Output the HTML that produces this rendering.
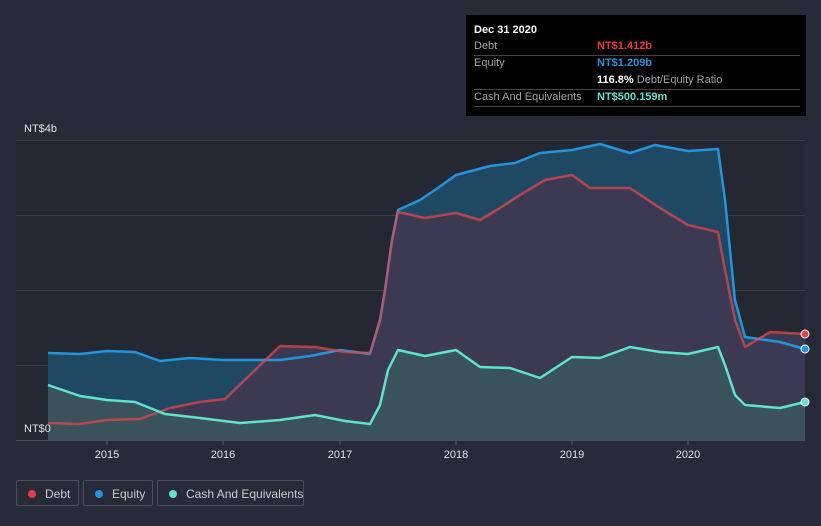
<!DOCTYPE html>
<html><head><style>
html,body{margin:0;background:#262b37;width:821px;height:526px;overflow:hidden;font-family:"Liberation Sans",sans-serif;position:relative}
.tt{position:absolute;left:466px;top:15px;width:340px;height:101px;background:#000}
.tt .r{position:absolute;left:8px;width:326px;font-size:11px;color:#a0a3a8;border-bottom:1px solid #444;height:17px;line-height:17px}
.lg{position:absolute;top:480px;height:26px;border:1px solid #4a4f5a;border-radius:2px;color:#c8cbd0;font-size:12px;line-height:26px;box-sizing:border-box;white-space:nowrap}
.lg i{position:absolute;left:11px;top:9px;width:8px;height:8px;border-radius:50%}
</style></head><body>
<svg width="821" height="526" style="position:absolute;left:0;top:0">
<rect x="16" y="140" width="789" height="300" fill="#232833"/>
<g stroke="#3a3f4a" stroke-width="1">
<line x1="16" y1="140.5" x2="805" y2="140.5"/><line x1="16" y1="215.5" x2="805" y2="215.5"/>
<line x1="16" y1="290.5" x2="805" y2="290.5"/><line x1="16" y1="365.5" x2="805" y2="365.5"/>
<line x1="16" y1="440.5" x2="805" y2="440.5" stroke="#4a4f5a"/>
</g>
<g stroke-linejoin="round">
<path d="M48,353 L80,354 107,351 135,352 160,361 190,358 223,360 280,360 310,356 340,350 370,354 380,320 385,290 392,240 398,210 420,200 435,190 456,175 490,166 515,163 540,153 572,150 600,144 630,153 655,145 688,151 718,149 725,200 735,300 745,337 780,342 805,349 L805,440 L48,440Z" fill="#1f4862"/>
<path d="M48,423 L80,424 107,420 140,419 170,408 200,402 225,399 250,375 280,346 315,347 345,352 370,353 380,320 385,290 392,240 398,212 425,218 456,213 480,220 500,208 520,195 545,180 572,175 590,188 630,188 660,208 688,225 718,232 725,270 735,320 745,347 770,332 805,334 L805,440 L48,440Z" fill="#3c3a52"/>
<path d="M48,385 L80,396 107,400 135,402 165,414 200,418 240,423 280,420 315,415 345,421 370,424 380,405 388,370 398,350 425,356 456,350 480,367 510,368 540,378 572,357 600,358 630,347 660,352 688,354 718,347 725,365 735,395 745,405 780,408 805,402 L805,440 L48,440Z" fill="#3a5259"/>
<g fill="none" stroke-width="2.5">
<polyline points="48,353 80,354 107,351 135,352 160,361 190,358 223,360 280,360 310,356 340,350 370,354 380,320 385,290 392,240 398,210 420,200 435,190 456,175 490,166 515,163 540,153 572,150 600,144 630,153 655,145 688,151 718,149 725,200 735,300 745,337 780,342 805,349" stroke="#2394df"/>
<polyline points="48,423 80,424 107,420 140,419 170,408 200,402 225,399 250,375 280,346 315,347 345,352 370,353 380,320 385,290 392,240 398,212 425,218 456,213 480,220 500,208 520,195 545,180 572,175 590,188 630,188 660,208 688,225 718,232 725,270 735,320 745,347 770,332 805,334" stroke="#e0474c" stroke-opacity=".75"/>
<polyline points="48,385 80,396 107,400 135,402 165,414 200,418 240,423 280,420 315,415 345,421 370,424 380,405 388,370 398,350 425,356 456,350 480,367 510,368 540,378 572,357 600,358 630,347 660,352 688,354 718,347 725,365 735,395 745,405 780,408 805,402" stroke="#5ee3cc"/>
</g></g>
<circle cx="805" cy="334" r="4" fill="#e0474c" stroke="#fff" stroke-width="1"/>
<circle cx="805" cy="349" r="4" fill="#2394df" stroke="#fff" stroke-width="1"/>
<circle cx="805" cy="402" r="4" fill="#5ee3cc" stroke="#fff" stroke-width="1"/>
<g stroke="#5a5f6a"><line x1="107" y1="441" x2="107" y2="445"/><line x1="223" y1="441" x2="223" y2="445"/><line x1="340" y1="441" x2="340" y2="445"/><line x1="456" y1="441" x2="456" y2="445"/><line x1="572" y1="441" x2="572" y2="445"/><line x1="688" y1="441" x2="688" y2="445"/></g>
<g fill="#e0e2e5" font-size="11" text-anchor="middle"><text x="107" y="458">2015</text><text x="223" y="458">2016</text><text x="340" y="458">2017</text><text x="456" y="458">2018</text><text x="572" y="458">2019</text><text x="688" y="458">2020</text></g>
<text x="24" y="132" fill="#e0e2e5" font-size="11">NT$4b</text>
<text x="24" y="432" fill="#e0e2e5" font-size="11">NT$0</text>
</svg>
<div class="tt">
<div style="position:absolute;left:8px;top:9px;color:#fff;font-weight:bold;font-size:11px">Dec 31 2020</div>
<div class="r" style="top:23px">Debt<span style="position:absolute;left:123px;color:#e9383f;font-weight:bold">NT$1.412b</span></div>
<div class="r" style="top:40px;border:none">Equity<span style="position:absolute;left:123px;color:#2394df;font-weight:bold">NT$1.209b</span></div>
<div class="r" style="top:57px"><span style="position:absolute;left:123px"><b style="color:#fff">116.8%</b> Debt/Equity Ratio</span></div>
<div class="r" style="top:74px">Cash And Equivalents<span style="position:absolute;left:123px;color:#5ee3cc;font-weight:bold">NT$500.159m</span></div>
</div>
<div class="lg" style="left:16px;width:63px"><i style="background:#e9383f"></i><span style="position:absolute;left:28px">Debt</span></div>
<div class="lg" style="left:83px;width:70px"><i style="background:#2394df"></i><span style="position:absolute;left:28px">Equity</span></div>
<div class="lg" style="left:157px;width:147px"><i style="background:#5ee3cc"></i><span style="position:absolute;left:28px">Cash And Equivalents</span></div>
</body></html>
